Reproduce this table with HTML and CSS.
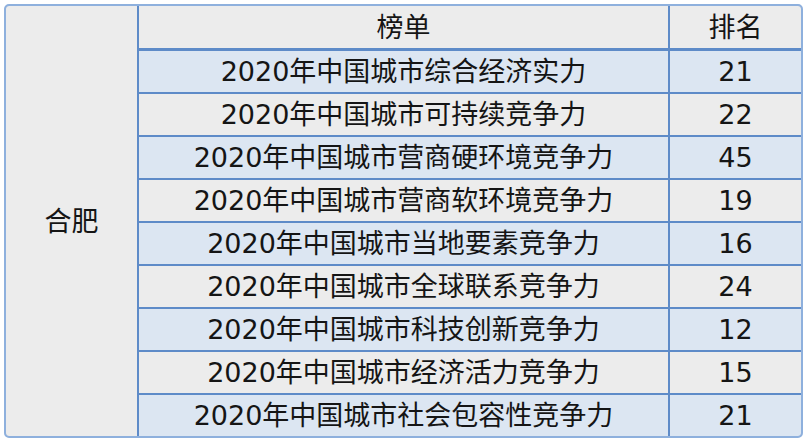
FILE: index.html
```html
<!DOCTYPE html>
<html lang="zh-CN">
<head>
<meta charset="utf-8">
<title>合肥 榜单排名</title>
<link rel="stylesheet" href="styles.css">
</head>
<body>
<div class="board">
  <div class="cell city">合肥</div>
  <div class="cell head">榜单</div>
  <div class="cell head">排名</div>

  <div class="cell blue">2020年中国城市综合经济实力</div>
  <div class="cell blue">21</div>
  <div class="cell">2020年中国城市可持续竞争力</div>
  <div class="cell">22</div>
  <div class="cell blue">2020年中国城市营商硬环境竞争力</div>
  <div class="cell blue">45</div>
  <div class="cell">2020年中国城市营商软环境竞争力</div>
  <div class="cell">19</div>
  <div class="cell blue">2020年中国城市当地要素竞争力</div>
  <div class="cell blue">16</div>
  <div class="cell">2020年中国城市全球联系竞争力</div>
  <div class="cell">24</div>
  <div class="cell blue">2020年中国城市科技创新竞争力</div>
  <div class="cell blue">12</div>
  <div class="cell">2020年中国城市经济活力竞争力</div>
  <div class="cell">15</div>
  <div class="cell blue">2020年中国城市社会包容性竞争力</div>
  <div class="cell blue">21</div>
</div>
</body>
</html>
```
FILE: styles.css
```css
html, body {
  margin: 0;
  padding: 0;
  background: #ffffff;
}

body {
  padding: 4px 0 0 4px;
  font-family: "DejaVu Sans", "Noto Sans CJK SC", sans-serif;
  color: #151515;
}

.board {
  width: 795px;
  display: grid;
  grid-template-columns: 131px 529px 131px;
  grid-template-rows: 43px repeat(9, 41px);
  gap: 2px;
  background: #5e8bc8;
  border: 2px solid #8eb0dd;
  border-radius: 5px;
  overflow: hidden;
}

.cell {
  display: flex;
  align-items: center;
  justify-content: center;
  background: #ececec;
  font-size: 27px;
  line-height: 1;
  white-space: nowrap;
}

.city {
  grid-row: 1 / span 10;
}

.head {
  box-sizing: border-box;
  border-bottom: 1px solid #5e8bc8;
  padding-top: 1px;
}

.blue {
  background: #dce6f2;
}
```
